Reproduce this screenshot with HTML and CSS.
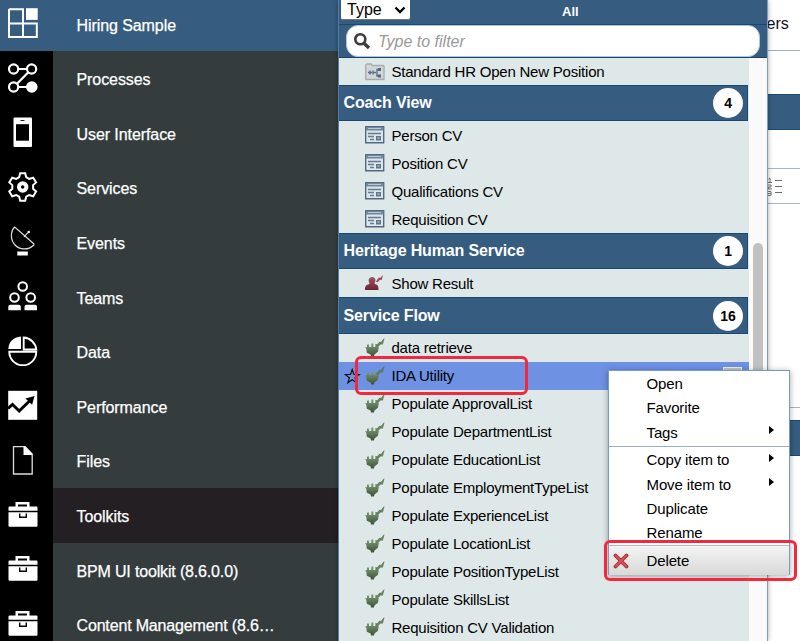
FILE: index.html
```html
<!DOCTYPE html>
<html lang="en">
<head>
<meta charset="utf-8">
<title>Hiring Sample</title>
<link rel="stylesheet" href="styles.css">
</head>
<body>
<svg class="defs" width="0" height="0">
  <defs>
    <linearGradient id="gg" x1="0" y1="0" x2="0" y2="1"><stop offset="0" stop-color="#7d9c77"/><stop offset="1" stop-color="#3d5238"/></linearGradient>
    <linearGradient id="rg" x1="0" y1="0" x2="0" y2="1"><stop offset="0" stop-color="#a0566a"/><stop offset="1" stop-color="#6e2231"/></linearGradient>
    <symbol id="case" viewBox="0 0 30 30"><path d="M7.500 6.500V2h14v4.500h7q1 0 1 1v3.300H.5V7.500q0-1 1-1zM10 6.500h9V4.500h-9zM.5 12.200h29v13.500q0 1-1 1h-27q-1 0-1-1zM11 13.500V18h8v-4.500h-1.400v3h-5.200v-3z" fill="#fff" fill-rule="evenodd"/></symbol>
    <symbol id="cv" viewBox="0 0 20 18"><path d="M.7.7h18v16H.7z" fill="#dce5eb" stroke="#536b80" stroke-width="1.400"/><path d="M1 1h17.500v3.500H1z" fill="#71879b"/><path d="M3 2.500h13" stroke="#b9c7d1"/><path d="M3 7.500h13M3 10.500h6M5 13.500h4" stroke="#657c90" stroke-width="1.500"/><path d="M11 10h5v4.500h-5z" fill="#60778b"/><path d="M12.500 11.500h2v1h-2z" fill="#dce5eb"/></symbol>
    <symbol id="flow" viewBox="0 0 20 20"><path d="M.2 9l1.800.3V6.500h2V9h2.300V5.500h2V9h2V6h2v3l1.500-.3-.8 5-3.600 2.800-.5 2H6l-.4-2-3.800-1.800-.4-3.500z" fill="url(#gg)"/><path d="M11.500 8l3-4 1.500.5L19 .7l-1.500 5.600-1.900-.4-2.700 2.900z" fill="#65835d" stroke="#536d4c" stroke-width=".6"/></symbol>
    <symbol id="human" viewBox="0 0 20 18"><path d="M0 16q-.3-5 3-5.500l1.700-.7Q3 7 4 4.700 5.200 2.500 8 3q3 1 2.400 4L9.500 9.700l2.500 1q1.700 1 1.500 5.300z" fill="url(#rg)"/><path d="M11 7.500l2.800-4 1.400.5L18 1l-1.300 5-1.700-.3-2.700 2.800z" fill="#93495b"/></symbol>
  </defs>
</svg>
<div class="app">
  <nav class="side">
    <div class="nav top"><span class="ic"><svg width="30" height="30" viewBox="0 0 30 30"><path d="M1 1.200h14V29M15 15.500H1M1 1v28h27.800V15.500H15" fill="none" stroke="#fff" stroke-width="2"/><path d="M18 .2h11.700v11.700H18z" fill="#fff"/></svg></span><span class="lb">Hiring Sample</span></div>
    <div class="nav"><span class="ic"><svg width="30" height="30" viewBox="0 0 30 30" fill="none" stroke="#fff" stroke-width="2.200"><circle cx="5.600" cy="6" r="4.600"/><circle cx="23.600" cy="6" r="4.600"/><circle cx="5.600" cy="24" r="4.600"/><circle cx="23.800" cy="24" r="4.700" fill="#fff"/><path d="M10 6h9M20.300 9.300L9 20.700M10 24h9"/></svg></span><span class="lb">Processes</span></div>
    <div class="nav"><span class="ic"><svg width="30" height="30" viewBox="0 0 30 30"><rect x="5.500" y=".5" width="18.500" height="29.500" rx="1" fill="#fff"/><path d="M8 7.200h13v16.500H8z"/><path d="M12.500 3.500h4" stroke="#222"/></svg></span><span class="lb">User Interface</span></div>
    <div class="nav"><span class="ic"><svg width="30" height="30" viewBox="0 0 30 30"><path d="M12.200 1.200h5l1 4 3 1.700 4-1.200 2.900 4.700-3 2.700v3.700l3 2.700-2.900 4.700-4-1.200-3 1.700-1 4h-5l-1-4-3-1.700-4 1.200-2.900-4.700 3-2.700v-3.700l-3-2.700 2.900-4.700 4 1.200 3-1.700z" fill="none" stroke="#fff" stroke-width="2"/><circle cx="14.700" cy="15" r="3.700" fill="none" stroke="#fff" stroke-width="4"/></svg></span><span class="lb">Services</span></div>
    <div class="nav"><span class="ic"><svg width="30" height="30" viewBox="0 0 30 30"><path d="M6.700 1C2 6 2.500 14 7 19c4.500 4.800 13 5.500 18.500.2q1-.8 0-1.700zM16 10.800l3.700-4" fill="none" stroke="#ddd" stroke-width="1.200"/><circle cx="20.700" cy="6" r="1.300" fill="#fff"/><path d="M9.300 25.500h10.500v4H9.300z" fill="#fff"/></svg></span><span class="lb">Events</span></div>
    <div class="nav"><span class="ic"><svg width="30" height="30" viewBox="0 0 30 30"><g fill="none" stroke="#fff" stroke-width="2"><circle cx="14.700" cy="5.500" r="4.300"/><circle cx="6.500" cy="16.500" r="4.300"/><circle cx="22.700" cy="16.500" r="4.300"/></g><path d="M.3 29.200v-3.400q0-2 2-2h8.500q2 0 2 2v3.400zM16.500 29.200v-3.400q0-2 2-2H27q2 0 2 2v3.400z" fill="#fff"/></svg></span><span class="lb">Teams</span></div>
    <div class="nav"><span class="ic"><svg width="30" height="30" viewBox="0 0 30 30"><path d="M13 .5V13H.3Q1 2 13 .5z" fill="#fff"/><path d="M15.700 1.500A13.500 13.500 0 0 1 28.300 13.500H15.700zM1.300 15.800h27a13.500 13.500 0 0 1-27 0z" fill="none" stroke="#fff" stroke-width="1.900"/></svg></span><span class="lb">Data</span></div>
    <div class="nav"><span class="ic"><svg width="30" height="30" viewBox="0 0 30 30"><path d="M.2.800h29v29H.2z" fill="#fff"/><path d="M0 18.500l4.500-4 6.700 6.500L22 10.500" fill="none" stroke="#000" stroke-width="3"/><path d="M17.500 8.500l9-2.500-2.400 8.700z"/></svg></span><span class="lb">Performance</span></div>
    <div class="nav"><span class="ic"><svg width="30" height="30" viewBox="0 0 30 30"><path d="M5.500 1.700h11.700l7 7.300v20H5.500z" fill="none" stroke="#ddd" stroke-width="1.300"/><path d="M15.500 1.700v8.200h8.700v-1.200l-7-7z" fill="#fff"/></svg></span><span class="lb">Files</span></div>
    <div class="nav sel"><span class="ic"><svg width="30" height="30"><use href="#case"/></svg></span><span class="lb">Toolkits</span></div>
    <div class="nav"><span class="ic"><svg width="30" height="30"><use href="#case"/></svg></span><span class="lb tight">BPM UI toolkit (8.6.0.0)</span></div>
    <div class="nav"><span class="ic"><svg width="30" height="30"><use href="#case"/></svg></span><span class="lb tight">Content Management (8.6…</span></div>
  </nav>
  <section class="panel">
    <header class="head">
      <div class="bar"><span class="type">Type<svg width="12" height="8" viewBox="0 0 12 8"><path d="M1.500 1.500L6 6l4.500-4.500" fill="none" stroke="#000" stroke-width="2.300"/></svg></span><b class="all">All</b></div>
      <div class="search"><svg width="18" height="18" viewBox="0 0 18 18" fill="none" stroke="#3d3d3d"><circle cx="7.300" cy="7.300" r="5" stroke-width="2.600"/><path d="M11 11.200l5 4.700" stroke-width="3.400"/></svg><i>Type to filter</i></div>
    </header>
    <div class="body">
      <div class="list">
        <div class="item first"><svg width="20" height="18" viewBox="0 0 20 18"><path d="M.7 16.500V2.500q0-1.500 1.500-1.500h4l1 1.500h11q.8 0 .8 1v13z" fill="#d3d6d8" stroke="#a7abae" stroke-width="1.300"/><path d="M3 9.500h4M5 7.500v4M8 7.500v4M8 9.500h3M15 6.500h-3v6.500h3" fill="none" stroke="#596e86" stroke-width="1.400"/><path d="M13 5h3v3h-3zM13 11.500h3v3h-3z" fill="#506780"/></svg>Standard HR Open New Position</div>
        <div class="group"><b>Coach View</b><span class="count">4</span></div>
        <div class="item"><svg width="20" height="18"><use href="#cv"/></svg>Person CV</div>
        <div class="item"><svg width="20" height="18"><use href="#cv"/></svg>Position CV</div>
        <div class="item"><svg width="20" height="18"><use href="#cv"/></svg>Qualifications CV</div>
        <div class="item"><svg width="20" height="18"><use href="#cv"/></svg>Requisition CV</div>
        <div class="group"><b>Heritage Human Service</b><span class="count">1</span></div>
        <div class="item"><svg width="20" height="18"><use href="#human"/></svg>Show Result</div>
        <div class="group"><b>Service Flow</b><span class="count">16</span></div>
        <div class="item"><svg width="20" height="20"><use href="#flow"/></svg>data retrieve</div>
        <div class="item active"><svg class="star" width="17" height="17" viewBox="0 0 17 17"><path d="M8.200 1.500l1.700 5h5.300l-4.200 3.200 1.500 5.100-4.300-3-4.300 3 1.500-5.100-4.200-3.200h5.300z" fill="none" stroke="#111" stroke-width="1.200"/></svg><svg width="20" height="20"><use href="#flow"/></svg>IDA Utility<span class="grip"></span></div>
        <div class="item"><svg width="20" height="20"><use href="#flow"/></svg>Populate ApprovalList</div>
        <div class="item"><svg width="20" height="20"><use href="#flow"/></svg>Populate DepartmentList</div>
        <div class="item"><svg width="20" height="20"><use href="#flow"/></svg>Populate EducationList</div>
        <div class="item"><svg width="20" height="20"><use href="#flow"/></svg>Populate EmploymentTypeList</div>
        <div class="item"><svg width="20" height="20"><use href="#flow"/></svg>Populate ExperienceList</div>
        <div class="item"><svg width="20" height="20"><use href="#flow"/></svg>Populate LocationList</div>
        <div class="item"><svg width="20" height="20"><use href="#flow"/></svg>Populate PositionTypeList</div>
        <div class="item"><svg width="20" height="20"><use href="#flow"/></svg>Populate SkillsList</div>
        <div class="item"><svg width="20" height="20"><use href="#flow"/></svg>Requisition CV Validation</div>
      </div>
      <div class="track"><div class="thumb"></div></div>
    </div>
  </section>
  <main class="page">
    <div class="tabs">ers</div>
    <div class="gap"></div>
    <div class="band"></div>
    <div class="space"></div>
    <div class="tools"><svg width="17" height="20" viewBox="0 0 17 20"><path d="M10 3.500h7M10 9.500h7M10 15.500h7" stroke="#6b6b6b"/><path d="M3.500 2L5 1v4M3 5.500h4M3 8h3v2H3.500v2H7M3 14.500h3v4H3M3 16.500h3" fill="none" stroke="#777"/></svg></div>
    <div class="blank"></div>
    <div class="strip"></div>
    <div class="band low"></div>
  </main>
</div>
<div class="mark item-mark"></div>
<div class="menu">
  <div class="opt">Open</div>
  <div class="opt">Favorite</div>
  <div class="opt">Tags<i class="arrow"></i></div>
  <div class="rule"></div>
  <div class="opt">Copy item to<i class="arrow"></i></div>
  <div class="opt">Move item to<i class="arrow"></i></div>
  <div class="opt">Duplicate</div>
  <div class="opt">Rename</div>
  <div class="opt del"><svg width="16" height="16" viewBox="0 0 16 16"><path d="M2.500 2.500l11 11M13.500 2.500l-11 11" stroke="#a83038" stroke-width="3.800" stroke-linecap="round"/><path d="M2.700 2.700l10.600 10.600M13.300 2.700L2.700 13.300" stroke="#d9545a" stroke-width="1.800" stroke-linecap="round"/></svg>Delete</div>
</div>
<div class="mark menu-mark"></div>
</body>
</html>
```
FILE: styles.css
```css
* { box-sizing: border-box; }
body {
  margin: 0;
  position: relative;
  width: 800px;
  height: 641px;
  overflow: hidden;
  background: #fff;
  font-family: "Liberation Sans", Arial, sans-serif;
  font-size: 15px;
  color: #111;
}
svg { display: block; flex: none; }
.defs { position: absolute; }
.app { display: flex; height: 641px; overflow: hidden; }

.side { width: 338px; flex: none; background: #343c3e; color: #fff; font-size: 16px; letter-spacing: -.08px; -webkit-text-stroke: .25px #fff; }
.nav { display: flex; height: 54.650px; }
.nav .ic { width: 53px; background: #000; padding: 11.500px 0 0 7.500px; }
.nav .lb { flex: 1; padding-left: 23.500px; line-height: 57px; white-space: nowrap; }
.nav .tight { letter-spacing: -.16px; }
.nav.sel .lb { background: #241f22; }
.nav.top { height: 51px; background: #365d7f; }
.nav.top .ic { background: none; padding-top: 8px; }
.nav.top .lb { line-height: 51px; }

.panel {
  width: 430px;
  flex: none;
  display: flex;
  flex-direction: column;
  border-left: 1px solid #4f7ea8;
  border-right: 1px solid #7d9dbd;
  box-shadow: 0 0 5px rgba(0, 0, 0, .35);
  z-index: 1;
}
.head { height: 58px; flex: none; background: #365d7f; border-bottom: 1px solid #174469; }
.bar { height: 25px; display: flex; border-bottom: 1px solid #174a73; }
.type {
  width: 69px;
  height: 20px;
  margin-left: 2px;
  padding: 0 4px 0 6px;
  display: flex;
  align-items: center;
  justify-content: space-between;
  background: #fff;
  border-bottom: 1px solid #777;
  border-radius: 0 0 2px 2px;
  font-size: 16px;
  color: #000;
}
.all { margin-left: 152px; line-height: 23px; font-size: 13px; color: #fff; }
.search {
  display: flex;
  align-items: center;
  width: 414px;
  height: 32px;
  margin-left: 7px;
  padding-left: 6px;
  gap: 7px;
  border: 1px solid #acc8dc;
  border-radius: 12px;
  background: #fff;
  color: #999;
  font-size: 16px;
}
.search i { padding-top: 1px; }
.body { flex: 1; display: flex; min-height: 0; overflow: hidden; }
.list { width: 410px; background: #dfe8e9; }
.item {
  position: relative;
  display: flex;
  align-items: center;
  height: 27.970px;
  padding-left: 26px;
  gap: 6.500px;
  white-space: nowrap;
  letter-spacing: -.22px;
  color: #000;
}
.item.first { height: 27px; }
.item.active { background: #6e91e3; }
.star { position: absolute; left: 5px; top: 6px; }
.grip { position: absolute; left: 384px; top: 5px; width: 19px; height: 17px; background: #c5c5c5; border: 1px solid #eee; }
.group {
  display: flex;
  align-items: center;
  justify-content: space-between;
  width: 409px;
  height: 36.300px;
  padding: 0 4px 0 4.500px;
  background: #365d7f;
  border: solid #174a73;
  border-width: 1px 1px 1px 0;
  color: #fff;
  font-size: 16px;
  letter-spacing: -.14px;
}
.count {
  width: 30px;
  height: 30px;
  border-radius: 50%;
  background: #fff;
  color: #000;
  font-weight: bold;
  font-size: 14px;
  line-height: 30px;
  text-align: center;
}
.track { flex: 1; background: #fafafa; padding: 185px 0 0 4px; }
.thumb { width: 10px; height: 320px; border-radius: 5px; background: #c1c1c1; }

.page { flex: 1; display: flex; flex-direction: column; }
.tabs { height: 51px; border-bottom: 1px solid #a0afbf; font-size: 16px; line-height: 47px; text-indent: -1.500px; }
.gap { height: 43px; }
.band { height: 36px; background: #365d7f; border: solid #174a73; border-width: 1px 0; }
.space { height: 38px; }
.tools { height: 36px; border: solid #a8b3c3; border-width: 1px 0; padding-top: 8px; }
.tools svg { margin-left: -3px; }
.blank { height: 203px; }
.strip { height: 13px; border-top: 1px solid #a8b3c3; }

.menu {
  position: absolute;
  left: 608px;
  top: 370px;
  width: 182px;
  height: 205px;
  background: #fff;
  border: 1px solid #769dc0;
  box-shadow: 0 1px 6px rgba(0, 0, 0, .35);
  z-index: 3;
}
.opt { display: flex; align-items: center; position: relative; height: 24.250px; padding-left: 37.500px; letter-spacing: -.12px; color: #000; }
.opt:first-child { margin-top: .5px; }
.arrow { position: absolute; left: 160px; top: 6px; border: solid transparent; border-width: 4.500px 0 4.500px 5.500px; border-left-color: #000; }
.rule { height: 1px; margin: 1.500px 0 1px; background: #9cb0c5; }
.del { height: 30px; background: linear-gradient(#f3f3f3, #d9d9d9); border-top: 1px solid #bbb; }
.del svg { position: absolute; left: 4px; top: 7px; }
.mark { position: absolute; border: 3px solid #f4283c; border-radius: 6px; }
.item-mark { left: 355px; top: 356px; width: 173px; height: 39px; z-index: 2; }
.menu-mark { left: 604px; top: 540px; width: 193px; height: 41px; z-index: 4; }
```
